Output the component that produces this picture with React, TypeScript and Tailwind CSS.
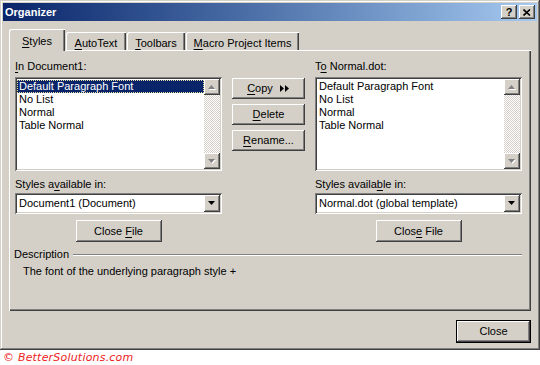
import React from "react";

const raised =
  "shadow-[inset_-1px_-1px_#404040,inset_1px_1px_#ffffff,inset_-2px_-2px_#808080,inset_2px_2px_#d4d0c8]";
const sunken =
  "shadow-[inset_1px_1px_#808080,inset_-1px_-1px_#ffffff,inset_2px_2px_#404040,inset_-2px_-2px_#d4d0c8]";

function U({ children }: { children: React.ReactNode }) {
  return <span className="underline underline-offset-[2px]">{children}</span>;
}

function Button({ children, className = "" }: { children: React.ReactNode; className?: string }) {
  return (
    <div className={`flex items-center justify-center bg-[#d4d0c8] text-black ${raised} ${className}`}>
      {children}
    </div>
  );
}

function Arrow({ dir, disabled }: { dir: "up" | "down"; disabled?: boolean }) {
  const pts = dir === "up" ? "3.5,0 7,4 0,4" : "0,0 7,0 3.5,4";
  return (
    <svg width="8" height="5" viewBox="0 0 8 5">
      {disabled && <polygon points={pts} fill="#ffffff" transform="translate(1,1)" />}
      <polygon points={pts} fill={disabled ? "#808080" : "#000000"} />
    </svg>
  );
}

function ScrollBar() {
  return (
    <div className="flex w-[16px] flex-col [background:repeating-conic-gradient(#d4d0c8_0%_25%,#ffffff_0%_50%)_0_0/2px_2px]">
      <Button className="h-[16px] w-[16px]">
        <Arrow dir="up" disabled />
      </Button>
      <div className="flex-1" />
      <Button className="h-[16px] w-[16px]">
        <Arrow dir="down" disabled />
      </Button>
    </div>
  );
}

const items = ["Default Paragraph Font", "No List", "Normal", "Table Normal"];

function ListBox({ selected }: { selected?: boolean }) {
  return (
    <div className={`flex h-[94px] w-[207px] bg-white p-[2px] ${sunken}`}>
      <div className="flex flex-1 flex-col pt-[1px]">
        {items.map((it, i) =>
          selected && i === 0 ? (
            <div
              key={it}
              className="h-[13px] border border-dotted border-[#e8e0a0] bg-[#0a246a] pl-[1px] leading-[11px] text-white"
            >
              {it}
            </div>
          ) : (
            <div key={it} className="h-[13px] pl-[2px] leading-[13px]">
              {it}
            </div>
          )
        )}
      </div>
      <ScrollBar />
    </div>
  );
}

function Combo({ value }: { value: string }) {
  return (
    <div className={`flex h-[21px] w-[207px] items-center bg-white p-[2px] ${sunken}`}>
      <div className="flex-1 pl-[2px] leading-[13px]">{value}</div>
      <Button className="h-[17px] w-[16px]">
        <Arrow dir="down" />
      </Button>
    </div>
  );
}

function Column({
  label,
  combo,
  avail,
  close,
  selected,
}: {
  label: React.ReactNode;
  combo: string;
  avail: React.ReactNode;
  close: React.ReactNode;
  selected?: boolean;
}) {
  return (
    <div className="flex w-[207px] flex-col">
      <div className="h-[13px] leading-[13px]">{label}</div>
      <div className="mt-[4px]">
        <ListBox selected={selected} />
      </div>
      <div className="mt-[7px] h-[13px] leading-[13px]">{avail}</div>
      <div className="mt-[2px]">
        <Combo value={combo} />
      </div>
      <div className="mt-[6px] flex justify-center">
        <Button className="h-[22px] w-[86px]">
          <span>{close}</span>
        </Button>
      </div>
    </div>
  );
}

function Tab({ children, active, w }: { children: React.ReactNode; active?: boolean; w: string }) {
  return active ? (
    <div
      className={`relative z-10 -mb-[1px] flex h-[22px] ${w} items-start justify-center rounded-tl-[2px] bg-[#d4d0c8] pt-[4px] shadow-[inset_1px_1px_#ffffff,inset_-1px_0_#404040,inset_-2px_0_#808080]`}
    >
      {children}
    </div>
  ) : (
    <div
      className={`ml-[1px] flex h-[18px] ${w} items-start justify-center rounded-tl-[2px] bg-[#d4d0c8] pt-[3px] shadow-[inset_1px_1px_#ffffff,inset_-1px_0_#404040,inset_-2px_0_#808080]`}
    >
      {children}
    </div>
  );
}

export default function App() {
  return (
    <div className="h-[365px] w-[540px] bg-white font-['Liberation_Sans',Arial,sans-serif] text-[11px] text-black">
      <div className="flex h-[350px] w-[540px] flex-col bg-[#d4d0c8] p-[3px] shadow-[inset_-1px_-1px_#404040,inset_1px_1px_#d4d0c8,inset_-2px_-2px_#808080,inset_2px_2px_#ffffff]">
        {/* caption */}
        <div className="flex h-[18px] items-center bg-gradient-to-r from-[#0a246a] to-[#a6caf0] pl-[2px] pr-[2px]">
          <div className="flex-1 text-[11px] font-bold leading-[13px] text-white">Organizer</div>
          <Button className="h-[14px] w-[16px]">
            <span className="text-[11px] font-bold leading-[11px]">?</span>
          </Button>
          <Button className="ml-[2px] h-[14px] w-[16px]">
            <svg width="8" height="7" viewBox="0 0 8 7">
              <path d="M0.5 0.5 L7 6.5 M7 0.5 L0.5 6.5" stroke="#000" strokeWidth="1.6" />
            </svg>
          </Button>
        </div>

        <div className="flex flex-1 flex-col px-[6px] pt-[8px]">
          {/* tabs */}
          <div className="flex h-[21px] items-end">
            <Tab active w="w-[56px]">
              <span>
                <U>S</U>tyles
              </span>
            </Tab>
            <Tab w="w-[60px]">
              <span>
                <U>A</U>utoText
              </span>
            </Tab>
            <Tab w="w-[58px]">
              <span>
                <U>T</U>oolbars
              </span>
            </Tab>
            <Tab w="w-[113px]">
              <span>
                <U>M</U>acro Project Items
              </span>
            </Tab>
          </div>

          {/* panel */}
          <div className="flex h-[261px] flex-col pl-[6px] pr-[9px] pt-[10px] shadow-[inset_1px_1px_#ffffff,inset_-1px_-1px_#404040,inset_-2px_-2px_#808080]">
            <div className="flex">
              <Column
                label={
                  <>
                    <U>I</U>n Document1:
                  </>
                }
                combo="Document1 (Document)"
                avail={
                  <>
                    Styles a<U>v</U>ailable in:
                  </>
                }
                close={
                  <>
                    Close <U>F</U>ile
                  </>
                }
                selected
              />
              <div className="ml-[10px] flex w-[73px] flex-col gap-[5px] pt-[18px]">
                <Button className="h-[21px]">
                  <span>
                    <U>C</U>opy
                  </span>
                  <svg className="ml-[7px]" width="10" height="7" viewBox="0 0 10 7">
                    <polygon points="0,0 4,3.5 0,7" fill="#000" />
                    <polygon points="5,0 9,3.5 5,7" fill="#000" />
                  </svg>
                </Button>
                <Button className="h-[21px]">
                  <span>
                    <U>D</U>elete
                  </span>
                </Button>
                <Button className="h-[21px]">
                  <span>
                    <U>R</U>ename...
                  </span>
                </Button>
              </div>
              <div className="ml-[10px]">
                <Column
                  label={
                    <>
                      T<U>o</U> Normal.dot:
                    </>
                  }
                  combo="Normal.dot (global template)"
                  avail={
                    <>
                      Styles availa<U>b</U>le in:
                    </>
                  }
                  close={
                    <>
                      Clos<U>e</U> File
                    </>
                  }
                />
              </div>
            </div>

            {/* description */}
            <div className="mt-[6px] flex h-[13px] items-center -ml-[1px]">
              <span className="leading-[13px]">Description</span>
              <div className="ml-[4px] h-[2px] flex-1 border-t border-b border-t-[#808080] border-b-white" />
            </div>
            <div className="ml-[8px] mt-[4px] leading-[13px]">The font of the underlying paragraph style +</div>
          </div>

          {/* bottom */}
          <div className="mt-[9px] flex justify-end">
            <div className="border border-black">
              <Button className="h-[21px] w-[73px]">Close</Button>
            </div>
          </div>
        </div>
      </div>
      <div className="pl-[3px] pt-[1px] font-['DejaVu_Sans',sans-serif] text-[11px] italic leading-[13px] tracking-[0.2px] text-[#ee2222]">
        © BetterSolutions.com
      </div>
    </div>
  );
}
